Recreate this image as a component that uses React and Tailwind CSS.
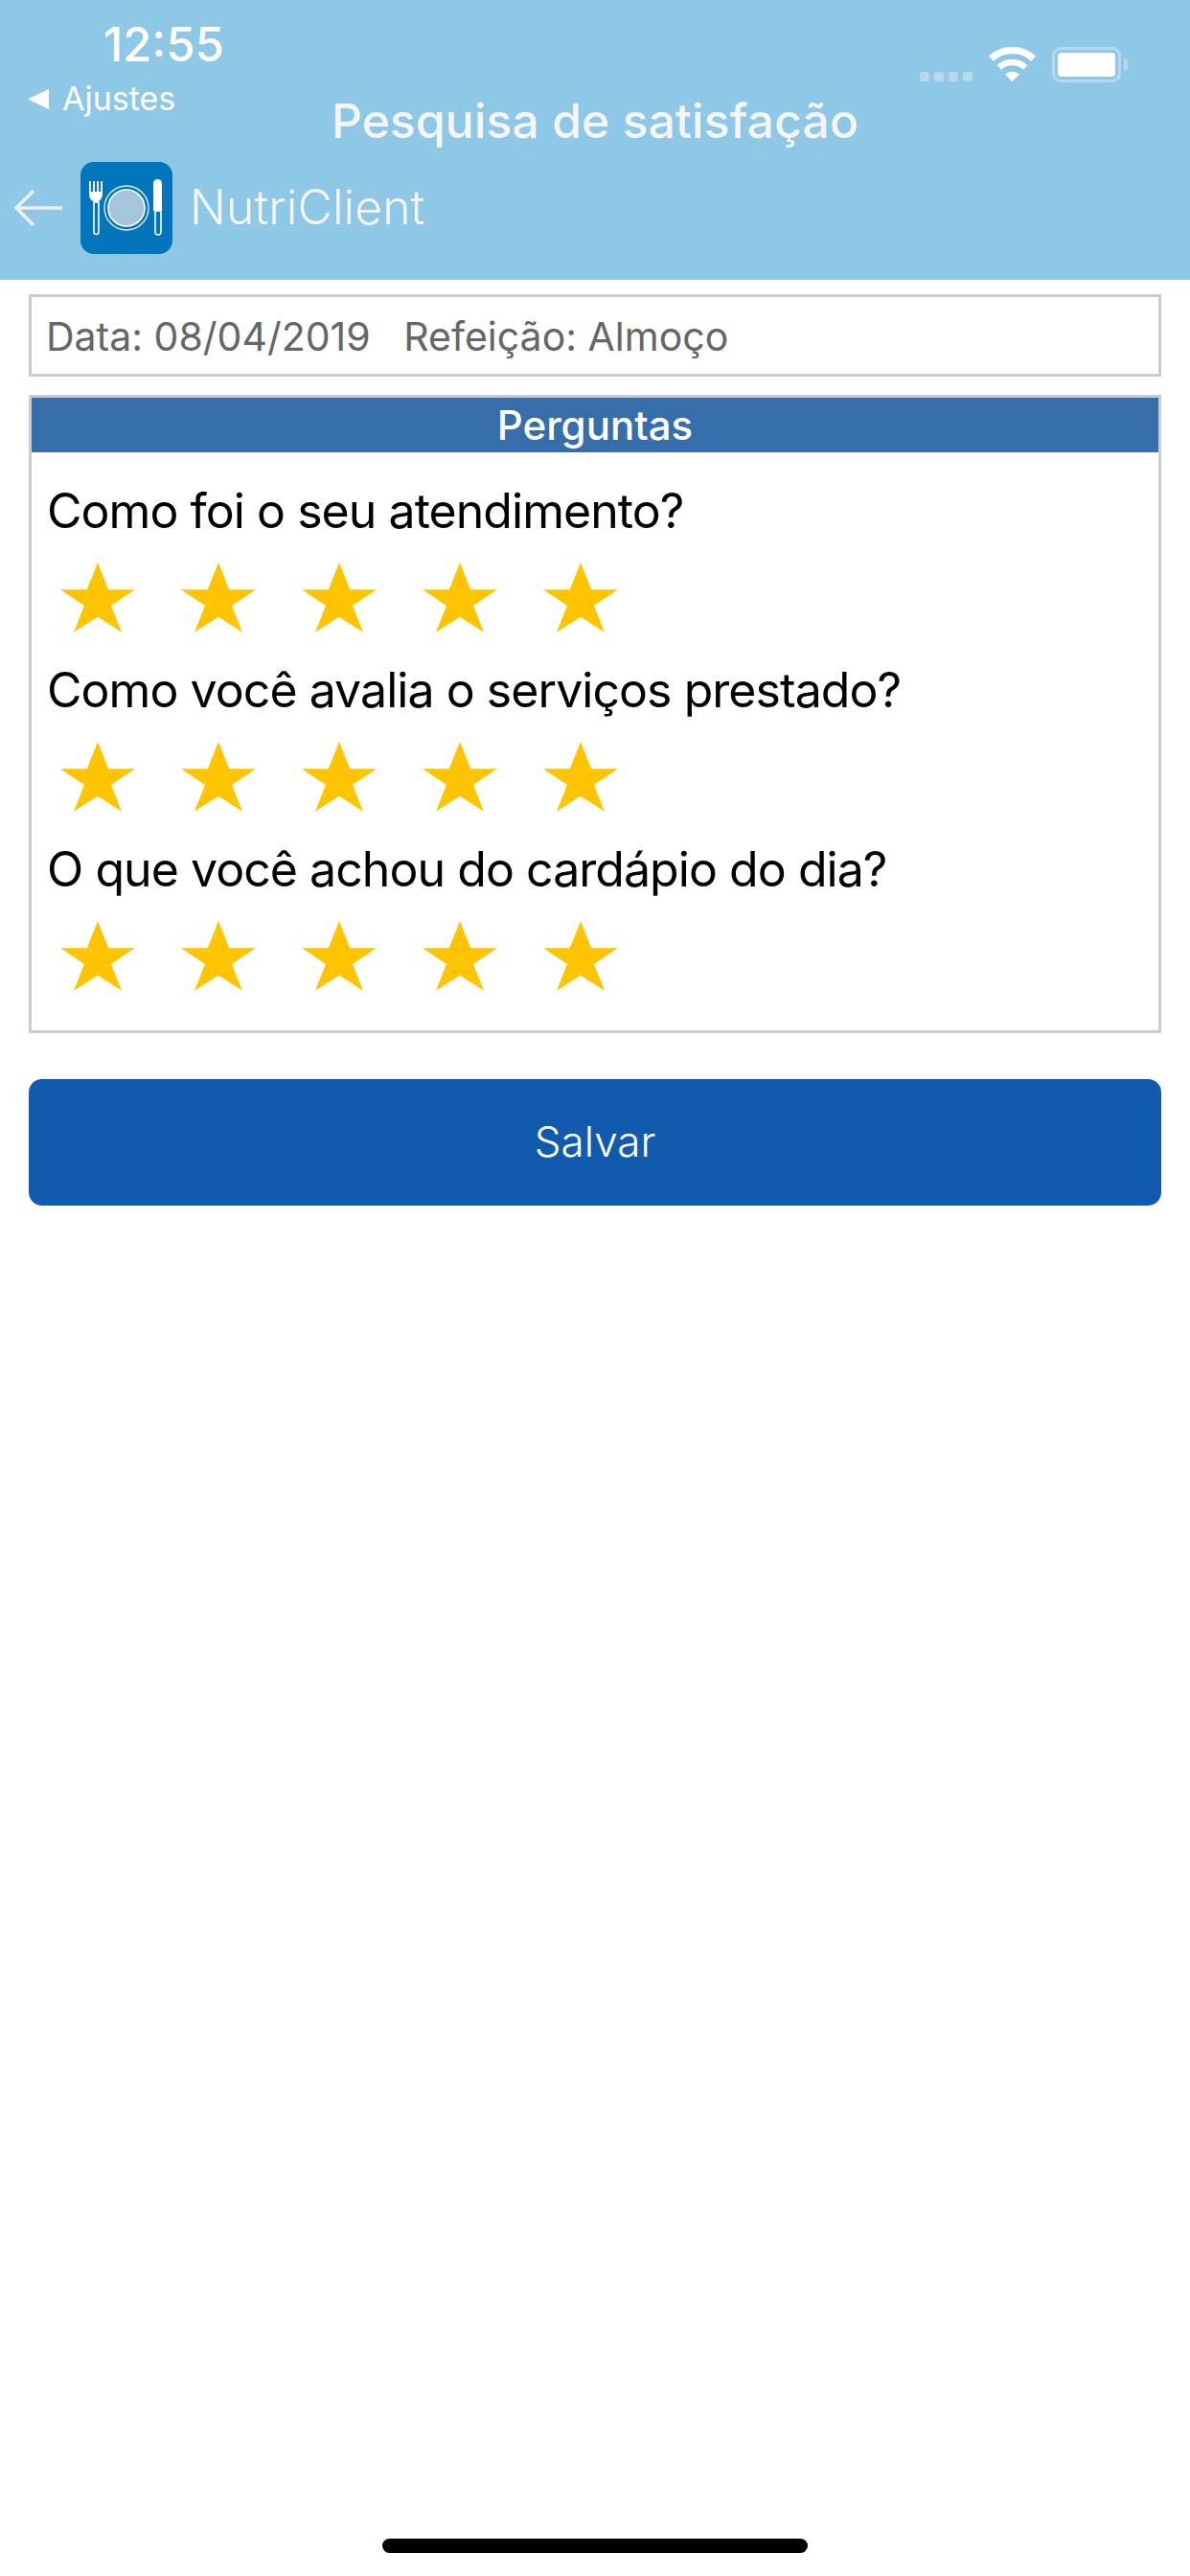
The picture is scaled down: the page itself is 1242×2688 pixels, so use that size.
const Star = () => (
  <svg viewBox="0 0 78 73" className="w-[78px] h-[73px] shrink-0 block">
    <polygon fill="#ffc400" points="39,0 50.2,28.3 78,28.3 53,45 64,72.7 39,56.7 14,72.7 25,45 0,28.3 27.8,28.3" />
  </svg>
);

const Question = ({ text }) => (
  <div className="pb-[32px]">
    <p className="text-[50px] leading-[56px] tracking-[-0.95px] text-black pl-[16px] whitespace-nowrap">{text}</p>
    <div className="flex gap-[48px] pl-[30px] mt-[26px]">
      <Star /><Star /><Star /><Star /><Star />
    </div>
  </div>
);

const Logo = () => (
  <svg viewBox="0 0 96 96" className="w-[96px] h-[96px] shrink-0 block">
    <rect width="96" height="96" rx="14" fill="#0275bd" />
    <path d="M9 20h1.8v11h2.3V20h1.9v11h2.2V20h1.9v11h2.1V20H23v14c0 4-3 7.5-7 8-4-.5-7-4-7-8z" fill="#fff" />
    <path d="M14 42h5v31a2.5 2.5 0 0 1-5 0z" fill="none" stroke="#fff" strokeWidth="1.6" />
    <circle cx="48" cy="48" r="23" fill="none" stroke="#fff" strokeWidth="1.4" opacity="0.85" />
    <circle cx="48" cy="48" r="19" fill="#a5c6da" stroke="#fff" strokeWidth="1.6" />
    <path d="M76 22.5a4.5 4.5 0 0 1 9 0V51h-9z" fill="#fff" />
    <path d="M78 51h6v22a3 3 0 0 1-6 0z" fill="none" stroke="#fff" strokeWidth="1.6" />
  </svg>
);

const Wifi = () => (
  <svg viewBox="0 0 49 36" className="w-[49px] h-[36px] block">
    <path d="M2.3 12.2A32.5 32.5 0 0 1 46.7 12.2" fill="none" stroke="#fff" strokeWidth="7" />
    <path d="M10.9 21.4A20 20 0 0 1 38.1 21.4" fill="none" stroke="#fff" strokeWidth="6.5" />
    <path d="M24.5 36L17 28.6A11 11 0 0 1 32 28.6z" fill="#fff" />
  </svg>
);

export default function App() {
  return (
    <div className="w-[1242px] h-[2688px] bg-white flex flex-col overflow-hidden font-['Inter','Roboto',sans-serif]">
      <header className="h-[292px] shrink-0 bg-[#8fc8e6] flex flex-col">
        <div className="flex justify-between h-[91px] shrink-0">
          <span className="pl-[108px] pt-[19px] text-[49px] leading-[56px] font-medium text-white">12:55</span>
          <div className="flex items-start pt-[49px] pr-[65px]">
            <div className="flex gap-[5px] mt-[26px] mr-[17px]">
              <span className="w-[10px] h-[10px] rounded-[3px] bg-[#b5daef]" />
              <span className="w-[10px] h-[10px] rounded-[3px] bg-[#b5daef]" />
              <span className="w-[10px] h-[10px] rounded-[3px] bg-[#b5daef]" />
              <span className="w-[10px] h-[10px] rounded-[3px] bg-[#b5daef]" />
            </div>
            <Wifi />
            <div className="flex items-center ml-[17px]">
              <div className="w-[72px] h-[37px] rounded-[9px] border-[3px] border-[#b5daef] p-[3px]">
                <div className="w-full h-full bg-white rounded-[4px]" />
              </div>
              <div className="w-[4px] h-[13px] ml-[3px] rounded-r-full bg-[#b5daef]" />
            </div>
          </div>
        </div>
        <div className="flex items-center gap-[14px] pl-[29px] h-[24px] shrink-0">
          <svg viewBox="0 0 22 21" className="w-[22px] h-[21px] block"><polygon points="0,10.5 22,0 22,21" fill="#fff" /></svg>
          <span className="text-[34px] leading-[24px] text-white">Ajustes</span>
        </div>
        <div className="text-center text-[50px] leading-[56px] font-medium text-[#f5f5f5] -mt-[17px] h-[71px] shrink-0">Pesquisa de satisfação</div>
        <div className="flex items-center pl-[15px]">
          <svg viewBox="0 0 51 40" className="w-[51px] h-[40px] block mr-[18px] opacity-90">
            <path d="M50 20H2M20 2L2 20l18 18" fill="none" stroke="#f5f5f5" strokeWidth="3.5" />
          </svg>
          <Logo />
          <span className="ml-[18px] pb-[3px] text-[50px] leading-[54px] font-light text-[#f5f5f5]">NutriClient</span>
        </div>
      </header>

      <main className="flex flex-col px-[30px] pt-[15px]">
        <div className="h-[86px] border-[3px] border-[#cccccc] flex items-center pl-[15px] pt-[3px] text-[41px] text-[#666666] whitespace-pre">
          Data: 08/04/2019   Refeição: Almoço
        </div>
        <section className="mt-[19px] h-[666px] border-[3px] border-[#cccccc]">
          <div className="h-[57px] bg-[#366eab] flex items-center justify-center text-[42px] font-medium text-white">Perguntas</div>
          <div className="pt-[33px]">
            <Question text="Como foi o seu atendimento?" />
            <Question text="Como você avalia o serviços prestado?" />
            <Question text="O que você achou do cardápio do dia?" />
          </div>
        </section>
        <button className="mt-[48px] h-[132px] pb-[2px] rounded-[14px] bg-[#115aad] text-white text-[44px] font-light">Salvar</button>
      </main>

      <div className="mt-auto mb-[24px] mx-auto w-[444px] h-[15px] rounded-full bg-black shrink-0" />
    </div>
  );
}
